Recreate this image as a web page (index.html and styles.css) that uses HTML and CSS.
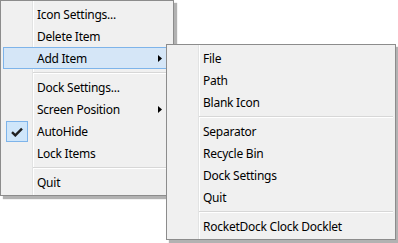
FILE: index.html
```html
<!DOCTYPE html>
<html lang="en">
<head>
    <meta charset="UTF-8">
    <title>RocketDock menu</title>
    <link rel="stylesheet" href="styles.css">
</head>
<body>
    <div class="desktop">
        <div class="menu main-menu">
            <div class="item">Icon Settings...</div>
            <div class="item">Delete Item</div>
            <div class="item item-active">
                Add Item
                <svg class="arrow" width="4" height="7" viewBox="0 0 4 7"><path d="M0 0 L4 3.5 L0 7 Z" fill="#000"/></svg>
            </div>
            <div class="separator"></div>
            <div class="item">Dock Settings...</div>
            <div class="item">
                Screen Position
                <svg class="arrow" width="4" height="7" viewBox="0 0 4 7"><path d="M0 0 L4 3.5 L0 7 Z" fill="#000"/></svg>
            </div>
            <div class="item">
                <span class="check">
                    <svg width="12" height="10" viewBox="0 0 12 10"><path d="M1 5.2 L4.3 8.4 L11 1.6" fill="none" stroke="#202020" stroke-width="2.4"/></svg>
                </span>
                AutoHide
            </div>
            <div class="item">Lock Items</div>
            <div class="separator"></div>
            <div class="item">Quit</div>

            <div class="menu sub-menu">
                <div class="item">File</div>
                <div class="item">Path</div>
                <div class="item">Blank Icon</div>
                <div class="separator"></div>
                <div class="item">Separator</div>
                <div class="item">Recycle Bin</div>
                <div class="item">Dock Settings</div>
                <div class="item">Quit</div>
                <div class="separator"></div>
                <div class="item">RocketDock Clock Docklet</div>
            </div>
        </div>
    </div>
</body>
</html>
```

FILE: styles.css
```css
/* Page */
body {
    margin: 0;
    background: #fff;
    font-family: 'Noto Sans', 'Segoe UI', sans-serif;
    font-size: 12px;
    letter-spacing: -0.25px;
    color: #000;
}

.desktop {
    height: 243px;
    overflow: hidden;
}

/* Menu box */
.menu {
    box-sizing: border-box;
    width: 174px;
    padding: 2px;
    border: 1px solid #8c8c8c;
    background-color: #f0f0f0;
    background-image: linear-gradient(to right,
        transparent 31px, #e2e3e3 31px, #e2e3e3 32px,
        #fff 32px, #fff 33px, transparent 33px);
    background-repeat: no-repeat;
    box-shadow: 3px 3px 1px rgba(0, 0, 0, 0.3);
}

.main-menu {
    position: relative;
}

.sub-menu {
    position: absolute;
    left: 165px;
    top: 43px;
    width: 230px;
}

/* Items */
.item {
    position: relative;
    box-sizing: border-box;
    height: 22px;
    line-height: 21px;
    padding-left: 33px;
    border: 1px solid transparent;
    white-space: nowrap;
}

.item-active {
    background: #d5e6f7;
    border-color: #7eb4ea;
}

.arrow {
    position: absolute;
    right: 8px;
    top: 7px;
}

.check {
    position: absolute;
    left: 2px;
    top: 0;
    width: 20px;
    height: 19px;
    border: 1px solid #7eb4ea;
    background: #cfe6fa;
    display: flex;
    justify-content: center;
    align-items: center;
}

/* Separator */
.separator {
    height: 1px;
    margin: 3px 0 2px 30px;
    background: #d7d7d7;
    border-bottom: 1px solid #fff;
}
```
